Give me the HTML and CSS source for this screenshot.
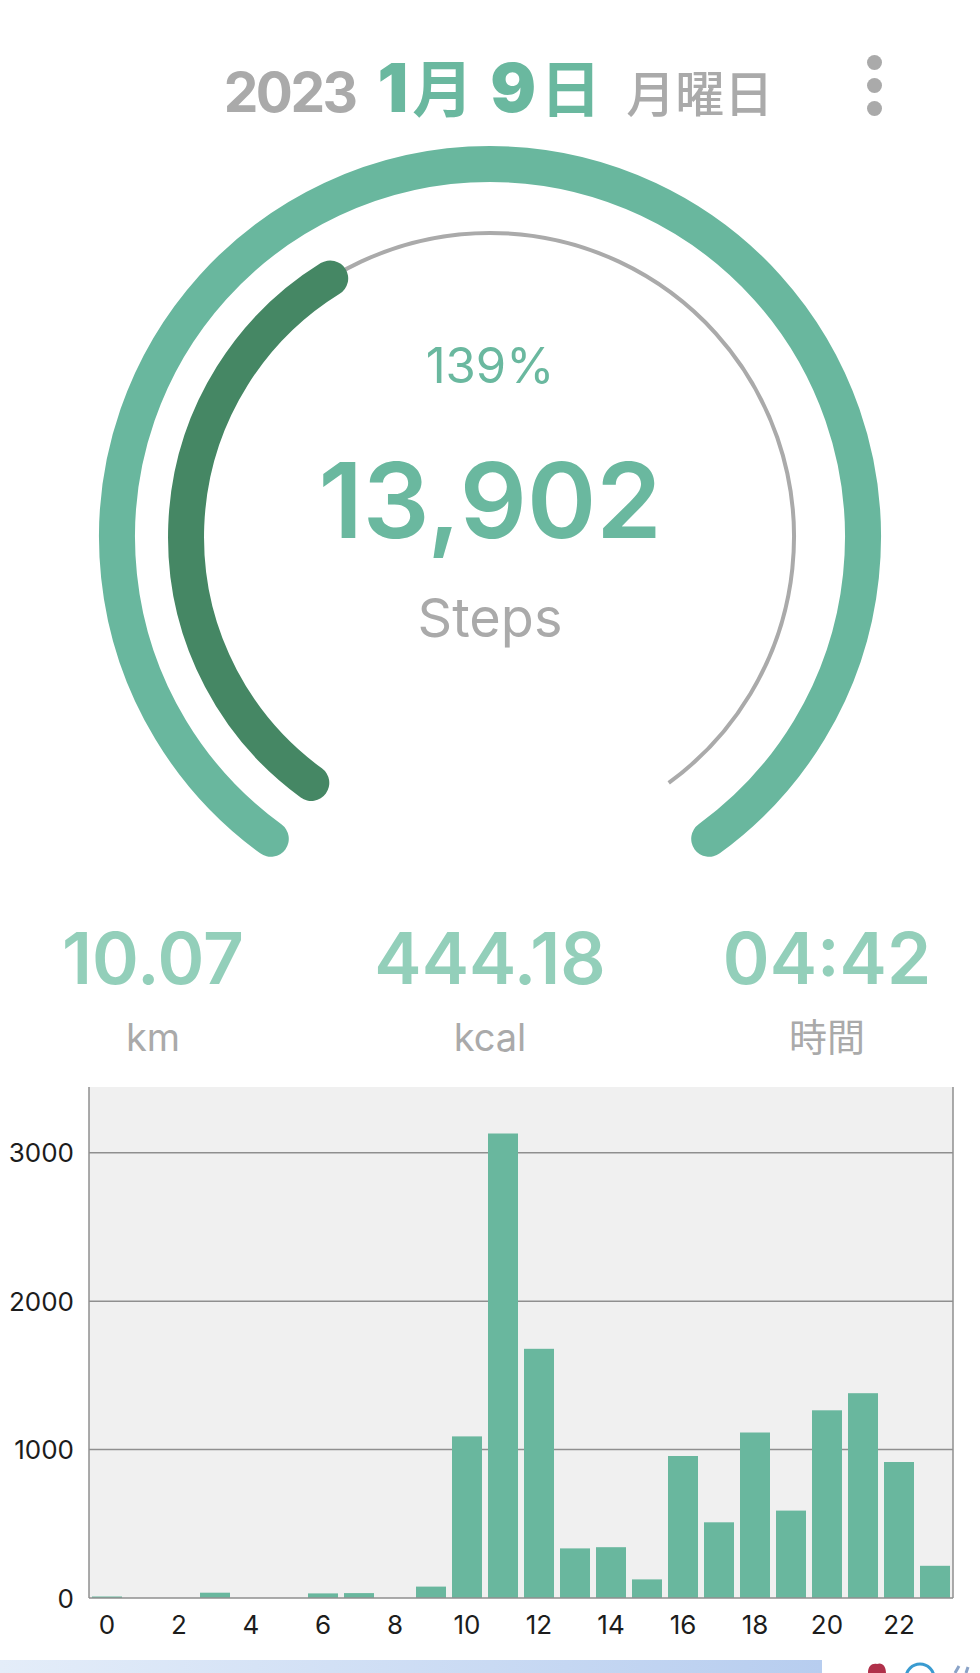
FILE: index.html
```html
<!DOCTYPE html>
<html lang="ja">
<head>
    <meta charset="UTF-8">
    <meta name="viewport" content="width=device-width, initial-scale=1.0">
    <title>歩数</title>
    <link rel="stylesheet" href="styles.css">
</head>
<body>
    <header class="top">
        <div></div>
        <h1 class="date">
            <span class="year">2023</span>
            <span class="day"><b>1</b>月</span>
            <span class="day"><b>9</b>日</span>
            <span class="week">月曜日</span>
        </h1>
        <button type="button" class="menu" aria-label="menu"><i></i><i></i><i></i></button>
    </header>

    <section class="gauge">
        <svg class="ring" width="980" height="740" viewBox="0 0 980 740">
            <path class="goal" d="M 270.8 698.8 A 373 373 0 1 1 709.2 698.8"/>
            <path class="track" d="M 311.3 642.9 A 304 304 0 1 1 668.7 642.9"/>
            <path class="over" d="M 311.3 642.9 A 304 304 0 0 1 330.2 138.4"/>
        </svg>
        <div class="gauge-text">
            <div class="pct">139%</div>
            <div class="steps">13,902</div>
            <div class="unit">Steps</div>
        </div>
    </section>

    <section class="stats">
        <div class="stat">
            <div class="num">10.07</div>
            <div class="lbl">km</div>
        </div>
        <div class="stat">
            <div class="num">444.18</div>
            <div class="lbl">kcal</div>
        </div>
        <div class="stat">
            <div class="num">04:42</div>
            <div class="lbl">時間</div>
        </div>
    </section>

    <svg class="chart" width="980" height="580" viewBox="0 0 980 580">
        <rect class="plot" x="89" y="7" width="864" height="511"/>
        <line class="grid" x1="89" y1="369.6" x2="953" y2="369.6"/>
        <line class="grid" x1="89" y1="221.2" x2="953" y2="221.2"/>
        <line class="grid" x1="89" y1="72.7" x2="953" y2="72.7"/>

        <rect class="bar" x="92" y="516.5" width="30" height="1.5"/>
        <rect class="bar" x="200" y="512.7" width="30" height="5.3"/>
        <rect class="bar" x="308" y="513.4" width="30" height="4.6"/>
        <rect class="bar" x="344" y="513.1" width="30" height="4.9"/>
        <rect class="bar" x="416" y="506.6" width="30" height="11.4"/>
        <rect class="bar" x="452" y="356.4" width="30" height="161.6"/>
        <rect class="bar" x="488" y="53.5" width="30" height="464.5"/>
        <rect class="bar" x="524" y="268.8" width="30" height="249.2"/>
        <rect class="bar" x="560" y="468.4" width="30" height="49.6"/>
        <rect class="bar" x="596" y="467.2" width="30" height="50.8"/>
        <rect class="bar" x="632" y="499.4" width="30" height="18.6"/>
        <rect class="bar" x="668" y="376" width="30" height="142"/>
        <rect class="bar" x="704" y="442.3" width="30" height="75.7"/>
        <rect class="bar" x="740" y="352.5" width="30" height="165.5"/>
        <rect class="bar" x="776" y="430.6" width="30" height="87.4"/>
        <rect class="bar" x="812" y="330.3" width="30" height="187.7"/>
        <rect class="bar" x="848" y="313.2" width="30" height="204.8"/>
        <rect class="bar" x="884" y="382" width="30" height="136"/>
        <rect class="bar" x="920" y="485.8" width="30" height="32.2"/>

        <line class="axis" x1="89" y1="7" x2="89" y2="518"/>
        <line class="axis" x1="953" y1="7" x2="953" y2="518"/>
        <line class="axis" x1="89" y1="518" x2="953" y2="518"/>

        <g class="ylabels">
            <text x="74" y="527.5">0</text>
            <text x="74" y="379">1000</text>
            <text x="74" y="230.7">2000</text>
            <text x="74" y="82.2">3000</text>
        </g>
        <g class="xlabels">
            <text x="107" y="554">0</text>
            <text x="179" y="554">2</text>
            <text x="251" y="554">4</text>
            <text x="323" y="554">6</text>
            <text x="395" y="554">8</text>
            <text x="467" y="554">10</text>
            <text x="539" y="554">12</text>
            <text x="611" y="554">14</text>
            <text x="683" y="554">16</text>
            <text x="755" y="554">18</text>
            <text x="827" y="554">20</text>
            <text x="899" y="554">22</text>
        </g>
    </svg>

    <footer class="dock">
        <div class="dock-bar"></div>
        <svg class="dock-icons" width="120" height="13" viewBox="0 0 120 13">
            <path d="M 8 13 C 8 6 12 3 17 4 C 22 2 26 6 26 13 Z" fill="#b0304a"/>
            <circle cx="60" cy="18" r="14" fill="none" stroke="#3a9bd0" stroke-width="3"/>
            <path d="M 95 13 L 99 6 M 106 13 L 108 7" stroke="#8aa3c8" stroke-width="3"/>
        </svg>
    </footer>
</body>
</html>
```

FILE: styles.css
```css
body {
    margin: 0;
    height: 1673px;
    overflow: hidden;
    background-color: #ffffff;
    font-family: 'Inter', 'Noto Sans CJK JP', sans-serif;
    color: #aaaaaa;
    display: flex;
    flex-direction: column;
}
.top {
    display: grid;
    grid-template-columns: 1fr auto 1fr;
    align-items: start;
    height: 140px;
}
.date {
    margin: 0;
    padding: 53px 0 0 17px;
    display: flex;
    align-items: baseline;
    gap: 22px;
    font-size: 55px;
    font-weight: 700;
    line-height: 1;
    white-space: nowrap;
    color: #aaaaaa;
}
.year {
    letter-spacing: -2.5px;
}
.day {
    color: #6ab89f;
    font-size: 61px;
}
.day + .day {
    margin-left: -5px;
}
.day b {
    font-size: 68px;
    margin-right: 4px;
}
.week {
    margin-left: 3px;
    font-size: 49px;
    font-weight: 500;
}
.menu {
    justify-self: end;
    margin: 55px 98px 0 0;
    padding: 0;
    border: none;
    background: none;
    display: flex;
    flex-direction: column;
    gap: 8px;
}
.menu i {
    display: block;
    width: 15px;
    height: 15px;
    border-radius: 50%;
    background-color: #aaaaaa;
}
.gauge {
    position: relative;
    height: 740px;
}
.ring {
    display: block;
}
.ring path {
    fill: none;
    stroke-linecap: round;
}
.goal {
    stroke: #69b79e;
    stroke-width: 36;
}
.track {
    stroke: #aaaaaa;
    stroke-width: 4;
}
.ring .track {
    stroke-linecap: butt;
}
.over {
    stroke: #458764;
    stroke-width: 36;
}
.gauge-text {
    position: absolute;
    inset: 0;
    display: flex;
    flex-direction: column;
    align-items: center;
    color: #6ab89f;
    line-height: 1;
}
.pct {
    margin-top: 201px;
    font-size: 49px;
}
.steps {
    margin-top: 57px;
    font-size: 105px;
    font-weight: 600;
}
.unit {
    margin-top: 39px;
    font-size: 54px;
    color: #aaaaaa;
}
.stats {
    display: grid;
    grid-template-columns: repeat(3, 337px);
    justify-content: center;
    margin-top: 43px;
    text-align: center;
    line-height: 1;
}
.num {
    font-size: 71px;
    font-weight: 600;
    color: #93cfba;
}
.lbl {
    margin-top: 24px;
    font-size: 38px;
    color: #aaaaaa;
}
.chart {
    display: block;
    margin-top: 24px;
}
.plot {
    fill: #f0f0f0;
}
.grid, .axis {
    stroke: #8f8f8f;
    stroke-width: 1.5;
}
.bar {
    fill: #69b79e;
}
.chart text {
    font-size: 26px;
    fill: #1c1c1c;
}
.ylabels text {
    text-anchor: end;
}
.xlabels text {
    text-anchor: middle;
}
.dock {
    display: flex;
    height: 13px;
}
.dock-bar {
    width: 822px;
    background: linear-gradient(90deg, #e4edf9, #b7cdef);
}
.dock-icons {
    margin-left: auto;
    display: block;
}
```
